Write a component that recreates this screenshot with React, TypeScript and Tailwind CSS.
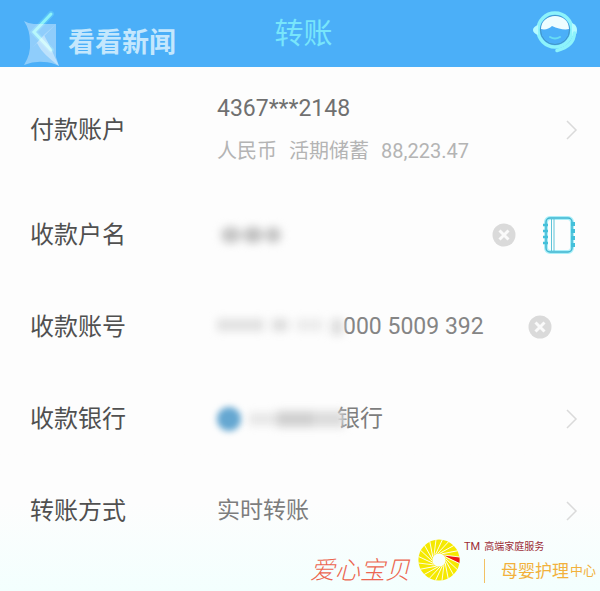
import type { ReactNode } from "react";

function Chevron() {
  return (
    <svg viewBox="0 0 12 22" className="h-[22px] w-3" fill="none" stroke="#dadada" strokeWidth="1.5" aria-hidden="true">
      <path d="M1 2 L10 11 L1 20" />
    </svg>
  );
}

function BackIcon() {
  return (
    <svg viewBox="0 0 26 44" className="h-11 w-[26px]" fill="none" strokeLinecap="round" aria-hidden="true">
      <path d="M21 4 L4 22 L21 40" stroke="#63cdfb" strokeWidth="6" opacity="0.6" />
      <path d="M21 4 L4 22 L21 40" stroke="#8cf3f8" strokeWidth="3" />
    </svg>
  );
}

function ServiceIcon() {
  return (
    <svg viewBox="0 0 46 46" className="size-[46px]" fill="none" aria-hidden="true">
      <circle cx="22" cy="21" r="17" stroke="#8df3fb" strokeWidth="3.5" />
      <circle cx="22" cy="21" r="14.5" stroke="#4396c5" strokeWidth="1" />
      <path d="M8 20 C8 12 15 7 22 7 C30 7 36 12 36 20 C32 21 25 20 19 17 C16 20 12 21 8 20Z" fill="#effdff" />
      <path d="M17 28 Q22 31 27 28" stroke="#67dcf3" strokeWidth="2" strokeLinecap="round" />
      <path d="M5 16 Q0 18 0 21 Q0 24 5 26Z" fill="#b5fbff" />
      <path d="M39 14 Q44 16 44 21 Q44 27 39 27Z" fill="#b5fbff" />
      <path d="M41.5 24 C41 34 34 39 24 41.5" stroke="#8df3fb" strokeWidth="3.5" strokeLinecap="round" />
    </svg>
  );
}

function ContactsIcon() {
  return (
    <svg viewBox="0 0 34 40" className="h-10 w-[34px]" fill="none" aria-hidden="true">
      <rect x="4" y="3" width="26" height="34" rx="4" stroke="#a9eff9" strokeWidth="4" />
      <rect x="4" y="3" width="26" height="34" rx="4" stroke="#42b5cf" strokeWidth="1.5" />
      <path d="M9.5 4 V36 M12 4 V36" stroke="#5fc3d7" strokeWidth="1" />
      <path d="M1 10 H6 M1 16 H6 M1 22 H6 M1 28 H6" stroke="#43c0da" strokeWidth="2.5" />
      <path d="M31 7 V11 M31 14 V18 M31 21 V25 M31 28 V32" stroke="#43c0da" strokeWidth="4" />
    </svg>
  );
}

function ClearButton({ label }: { label: string }) {
  return (
    <button type="button" aria-label={label} className="shrink-0">
      <svg viewBox="0 0 24 24" className="size-6" aria-hidden="true">
        <circle cx="12" cy="12" r="11.5" fill="#dadada" />
        <path d="M7.5 7.5 L16.5 16.5 M16.5 7.5 L7.5 16.5" stroke="#fafafa" strokeWidth="3" />
      </svg>
    </button>
  );
}

function NewsMark() {
  return (
    <div className="pointer-events-none absolute left-6 top-5 flex items-center gap-2">
      <svg viewBox="0 0 36 46" className="h-[46px] w-9" aria-hidden="true">
        <path d="M0 1 Q5 4 10 4 H32 V37 L35 46 Q27 42 20 42 Q10 41 0 45 Q7 34 6 22 Q6 10 0 1Z" fill="#fff" opacity="0.38" />
        <path d="M32 4 L20 15 L8 28 M13 23 C18 33 25 38 35 46 C29 33 25 24 20 15" fill="#fff" opacity="0.4" />
      </svg>
      <span className="text-[27px] font-bold leading-8 text-[#c4e7fd]">看看新闻</span>
    </div>
  );
}

function Row({ htmlFor, label, children }: { htmlFor: string; label: string; children: ReactNode }) {
  return (
    <div className="flex h-[92px] items-center first:h-[122px] first:pt-1">
      <label htmlFor={htmlFor} className="w-[187px] shrink-0 text-2xl text-[#505050]">
        {label}
      </label>
      {children}
    </div>
  );
}

const blades = Array.from({ length: 20 }, (_, i) => i * 18);

function Flower() {
  return (
    <svg viewBox="-21 -21 42 42" className="size-[42px]" aria-hidden="true">
      <circle r="13.6" fill="none" stroke="#f5e900" strokeWidth="14" />
      <path d="M4.5 -5 L20.4 -2.8 A20.6 20.6 0 0 1 20.3 3.6Z" fill="#ef1515" />
      {blades.map((angle) => (
        <path key={angle} d="M4.5 -5 L20.6 -3" transform={`rotate(${angle})`} stroke="#fffef0" strokeWidth="0.9" />
      ))}
    </svg>
  );
}

function CareMark() {
  return (
    <footer className="absolute bottom-1 right-1 flex items-end">
      <span className="text-[25px] font-light italic leading-8 text-[#ec6650]">爱心宝贝</span>
      <span className="mb-1.5 ml-2">
        <Flower />
      </span>
      <div className="mb-1 w-[136px]">
        <p className="flex gap-1 pl-1 text-[10px] leading-4 text-[#9c2c36]">
          <span className="text-[11px]">TM</span>
          <span>高端家庭服务</span>
        </p>
        <p className="ml-6 mt-1 flex items-center gap-px border-l border-[#f2c163] pl-4 leading-6 text-[#f2b13c]">
          <span className="whitespace-nowrap text-[17px]">母婴护理</span>
          <span className="whitespace-nowrap text-[13px]">中心</span>
        </p>
      </div>
    </footer>
  );
}

export default function App() {
  return (
    <div className="relative min-h-screen bg-linear-to-b from-[#fdfdfd] from-85% to-[#f3fffe] font-['Roboto','Noto_Sans_CJK_SC',sans-serif]">
      <header className="relative flex h-[67px] items-center justify-between bg-[#4baff8] pl-[30px] pr-[21px]">
        <button type="button" aria-label="返回" className="w-11 pb-1">
          <BackIcon />
        </button>
        <h1 className="text-[29px] leading-9 text-[#78e5fb]">转账</h1>
        <button type="button" aria-label="客服" className="pb-1">
          <ServiceIcon />
        </button>
        <NewsMark />
      </header>

      <form className="pl-[30px] pr-[22px]">
        <Row htmlFor="payer" label="付款账户">
          <button id="payer" type="button" className="flex flex-1 items-center justify-between text-left">
            <span>
              <span className="block text-[23px] leading-[42px] text-[#707070]">4367***2148</span>
              <span className="flex gap-3 text-xl leading-[42px] text-[#b4b4b4]">
                <span>人民币</span>
                <span>活期储蓄</span>
                <span>88,223.47</span>
              </span>
            </span>
            <Chevron />
          </button>
        </Row>

        <Row htmlFor="payee" label="收款户名">
          <span className="flex flex-1 items-center">
            <span className="flex gap-0.5 pl-1 blur-[4px]" aria-hidden="true">
              <span className="h-4 w-5 rounded-lg bg-[#c6c6c6]" />
              <span className="h-4 w-5 rounded-lg bg-[#c2c2c2]" />
              <span className="h-4 w-4 rounded-lg bg-[#c4c4c4]" />
            </span>
            <input id="payee" type="text" className="w-0 flex-1 bg-transparent text-[23px] text-[#777777] outline-none" />
          </span>
          <ClearButton label="清除户名" />
          <button type="button" aria-label="通讯录" className="ml-[26px] mr-0.5">
            <ContactsIcon />
          </button>
        </Row>

        <Row htmlFor="account" label="收款账号">
          <span className="flex flex-1 items-center">
            <span className="flex w-[126px] gap-2 blur-[4px]" aria-hidden="true">
              <span className="h-3 w-12 bg-[#e0e0e0]" />
              <span className="h-3 w-4 bg-[#dddddd]" />
              <span className="h-3 w-7 bg-[#ebebeb]" />
              <span className="h-4 w-3 bg-[#dddddd]" />
            </span>
            <input
              id="account"
              type="text"
              defaultValue="000 5009 392"
              className="w-0 flex-1 bg-transparent text-[23px] text-[#858585] outline-none"
            />
          </span>
          <span className="mr-[26px] flex">
            <ClearButton label="清除账号" />
          </span>
        </Row>

        <Row htmlFor="bank" label="收款银行">
          <button id="bank" type="button" className="flex flex-1 items-center justify-between">
            <span className="flex items-center">
              <span className="size-6 rounded-full bg-[#65a7d1] blur-[3px]" aria-hidden="true" />
              <span className="relative z-10 -mr-1 ml-2 flex w-[100px] items-center blur-[4px]" aria-hidden="true">
                <span className="h-3 w-7 bg-[#e6e6e6]" />
                <span className="h-4 w-9 bg-[#d0d0d0]" />
                <span className="h-4 w-8 bg-[#dcdcdc]" />
              </span>
              <span className="-ml-2 text-[23px] text-[#7d7d7d]">银行</span>
            </span>
            <Chevron />
          </button>
        </Row>

        <Row htmlFor="method" label="转账方式">
          <button id="method" type="button" className="flex flex-1 items-center justify-between text-[23px] text-[#7d7d7d]">
            <span>实时转账</span>
            <Chevron />
          </button>
        </Row>
      </form>
      <CareMark />
    </div>
  );
}
